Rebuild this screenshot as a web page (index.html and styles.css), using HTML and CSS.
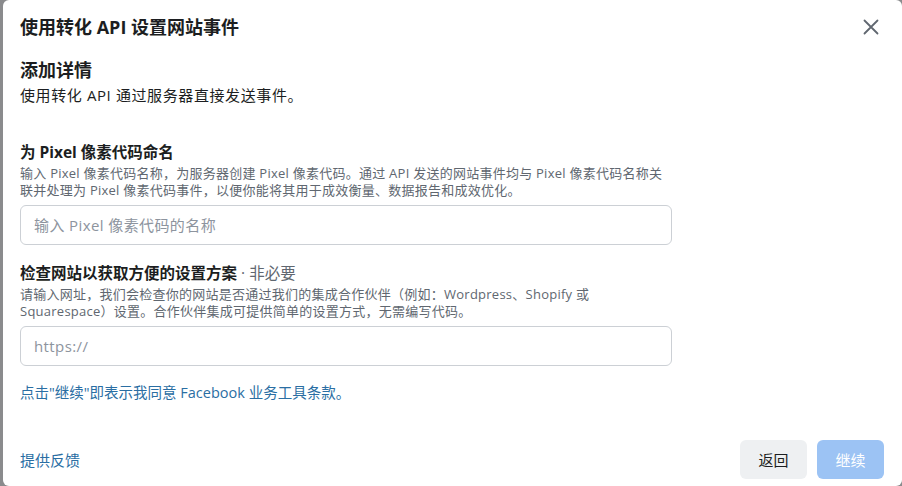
FILE: index.html
```html
<!DOCTYPE html>
<html lang="zh-CN">
<head>
<meta charset="utf-8">
<title>使用转化 API 设置网站事件</title>
<link rel="stylesheet" href="styles.css">
</head>
<body>
<div class="dialog">

  <div class="header">
    <div class="title">使用转化 API 设置网站事件</div>
    <span class="close" title="关闭">
      <svg width="16" height="16" viewBox="0 0 16 16"><path d="M1.5 1.5 L14.5 14.5 M14.5 1.5 L1.5 14.5" stroke="#606770" stroke-width="1.8" stroke-linecap="round" fill="none"/></svg>
    </span>
  </div>

  <h2 class="heading">添加详情</h2>
  <p class="lead">使用转化 API 通过服务器直接发送事件。</p>

  <div class="field first">
    <div class="label">为 Pixel 像素代码命名</div>
    <div class="help">输入 Pixel 像素代码名称，为服务器创建 Pixel 像素代码。通过 API 发送的网站事件均与 Pixel 像素代码名称关<br>联并处理为 Pixel 像素代码事件，以便你能将其用于成效衡量、数据报告和成效优化。</div>
    <input class="input" type="text" placeholder="输入 Pixel 像素代码的名称">
  </div>

  <div class="field">
    <div class="label">检查网站以获取方便的设置方案<span class="optional"> · 非必要</span></div>
    <div class="help">请输入网址，我们会检查你的网站是否通过我们的集成合作伙伴（例如：Wordpress、Shopify 或<br>Squarespace）设置。合作伙伴集成可提供简单的设置方式，无需编写代码。</div>
    <input class="input" type="text" placeholder="https://">
  </div>

  <p class="terms"><a href="#">点击"继续"即表示我同意 Facebook 业务工具条款。</a></p>

  <div class="footer">
    <a class="feedback" href="#">提供反馈</a>
    <div class="buttons">
      <button class="btn back">返回</button>
      <button class="btn next" disabled>继续</button>
    </div>
  </div>

</div>
</body>
</html>
```

FILE: styles.css
```css
html, body { height: 100%; }

body {
  margin: 0;
  background: #8a8b8d;
  font-family: "Open Sans", "Noto Sans CJK SC", sans-serif;
  color: #1c1e21;
  overflow: hidden;
}

a { color: #2a6ea3; text-decoration: none; }

.dialog {
  margin-left: 3px;
  height: 486px;
  background: #fff;
  border-radius: 6px;
  padding: 0 18px 0 17px;
  box-sizing: border-box;
}

.header {
  display: flex;
  justify-content: space-between;
  align-items: center;
  padding-top: 15px;
}
.title { font-size: 18px; font-weight: bold; line-height: 24px; }
.close {
  width: 24px; height: 24px;
  display: flex; align-items: center; justify-content: center;
  margin-right: 1px;
}

.heading {
  margin: 18px 0 0;
  font-size: 18px;
  line-height: 26px;
}
.lead {
  margin: 2px 0 0;
  font-size: 15px;
  line-height: 20px;
  letter-spacing: 0.6px;
  color: #1c1e21;
}

.field { margin-top: 17px; }
.field.first { margin-top: 36px; }
.label { font-size: 15.5px; font-weight: bold; line-height: 22px; }
.label .optional { font-weight: normal; color: #606770; }
.help {
  margin-top: 2px;
  font-size: 13px;
  line-height: 17px;
  letter-spacing: 0.25px;
  color: #606770;
}

.input {
  display: block;
  margin-top: 6px;
  width: 652px;
  height: 40px;
  box-sizing: border-box;
  border: 1px solid #ccd0d5;
  border-radius: 6px;
  padding: 0 13px;
  font: inherit;
  font-size: 15px;
  letter-spacing: 0.4px;
  color: #1c1e21;
}
.input::placeholder { color: #8d949e; }

.terms {
  margin: 17px 0 0;
  font-size: 14.5px;
  line-height: 20px;
}

.footer {
  margin-top: 37px;
  display: flex;
  justify-content: space-between;
  align-items: center;
}
.feedback { font-size: 15px; line-height: 20px; }
.buttons { display: flex; gap: 10px; }
.btn {
  width: 67px;
  height: 39px;
  border: none;
  border-radius: 6px;
  font: inherit;
  font-size: 15px;
}
.btn.back { background: #eef0f2; color: #1c1e21; }
.btn.next { background: #9cc3f4; color: #fff; }
```
